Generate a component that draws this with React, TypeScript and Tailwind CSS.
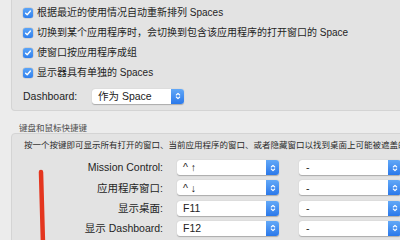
const FONT = "font-['Liberation_Sans','Noto_Sans_CJK_SC',sans-serif]";

function Check() {
  return (
    <span className="flex h-[10px] w-[10px] items-center justify-center rounded-[2.5px] bg-gradient-to-b from-[#5ba4f7] to-[#2f7fec] shadow-[0_0_0_0.5px_rgba(0,0,0,0.15)]">
      <svg width="8" height="8" viewBox="0 0 8 8">
        <path d="M1.6 4.2 L3.2 5.8 L6.4 2" fill="none" stroke="white" strokeWidth="1.4" strokeLinecap="round" strokeLinejoin="round" />
      </svg>
    </span>
  );
}

function Stepper() {
  return (
    <span className="flex h-full w-[13px] items-center justify-center rounded-r-[3px] bg-gradient-to-b from-[#62a8f7] to-[#2a78ea]">
      <svg width="6" height="10" viewBox="0 0 6 10">
        <path d="M1.3 4 L3 2.3 L4.7 4 M1.3 6 L3 7.7 L4.7 6" fill="none" stroke="white" strokeWidth="1.1" strokeLinecap="round" strokeLinejoin="round" />
      </svg>
    </span>
  );
}

function Select({ value, width, pad }: { value: string; width: string; pad: string }) {
  return (
    <div className={`flex h-[15px] ${width} items-center justify-between rounded-[3px] bg-white shadow-[0_0.5px_1px_rgba(0,0,0,0.25)]`}>
      <span className={`${pad} text-[10.5px] leading-none text-[#222]`}>{value}</span>
      <Stepper />
    </div>
  );
}

const checks = [
  "根据最近的使用情况自动重新排列 Spaces",
  "切换到某个应用程序时，会切换到包含该应用程序的打开窗口的 Space",
  "使窗口按应用程序成组",
  "显示器具有单独的 Spaces",
];

const shortcuts = [
  { label: "Mission Control:", key: "^ ↑" },
  { label: "应用程序窗口:", key: "^ ↓" },
  { label: "显示桌面:", key: "F11" },
  { label: "显示 Dashboard:", key: "F12" },
];

export default function App() {
  return (
    <div className={`relative h-[240px] w-[400px] overflow-hidden bg-[#ececec] text-[#1f1f1f] ${FONT}`}>
      <div className="pl-[11px]">
        <div className="h-[111px] w-[400px] rounded-b-[4px] border border-t-0 border-[#d4d4d4] bg-[#e3e3e3] pl-[11px] pt-[3px]">
          {checks.map((c) => (
            <div key={c} className="flex h-[20px] items-center gap-[4px]">
              <Check />
              <span className="whitespace-nowrap text-[10px] leading-none">{c}</span>
            </div>
          ))}
          <div className="mt-[2px] flex h-[22px] items-center">
            <span className="w-[69px] text-[10.5px] leading-none">Dashboard:</span>
            <Select value="作为 Space" width="w-[92px]" pad="pl-[6px]" />
          </div>
        </div>
      </div>

      <div className="h-[22px] pl-[19px] pt-[12px] text-[8.5px] leading-[10px] text-[#4a4a4a]">键盘和鼠标快捷键</div>

      <div className="ml-[11px] h-[120px] w-[400px] rounded-[4px] border border-[#d4d4d4] bg-[#e3e3e3] pt-[5px]">
        <div className="whitespace-nowrap pl-[12px] text-[8.5px] leading-[12px] text-[#2a2a2a]">
          按一个按键即可显示所有打开的窗口、当前应用程序的窗口、或者隐藏窗口以找到桌面上可能被遮盖的
        </div>
        <div className="mt-[9px] flex flex-col gap-[5.33px]">
          {shortcuts.map((s) => (
            <div key={s.label} className="flex h-[15px] items-center">
              <span className="w-[151px] whitespace-nowrap text-right text-[10.5px] leading-none">{s.label}</span>
              <div className="ml-[14px] flex gap-[20px]">
                <Select value={s.key} width="w-[102px]" pad="pl-[6px]" />
                <Select value="-" width="w-[102px]" pad="pl-[7px]" />
              </div>
            </div>
          ))}
        </div>
      </div>

      <svg className="absolute left-[34px] top-[168px]" width="16" height="76" viewBox="0 0 16 76">
        <path d="M7 4 L9 76" stroke="#e4361f" strokeWidth="4.5" strokeLinecap="round" fill="none" />
      </svg>
    </div>
  );
}
